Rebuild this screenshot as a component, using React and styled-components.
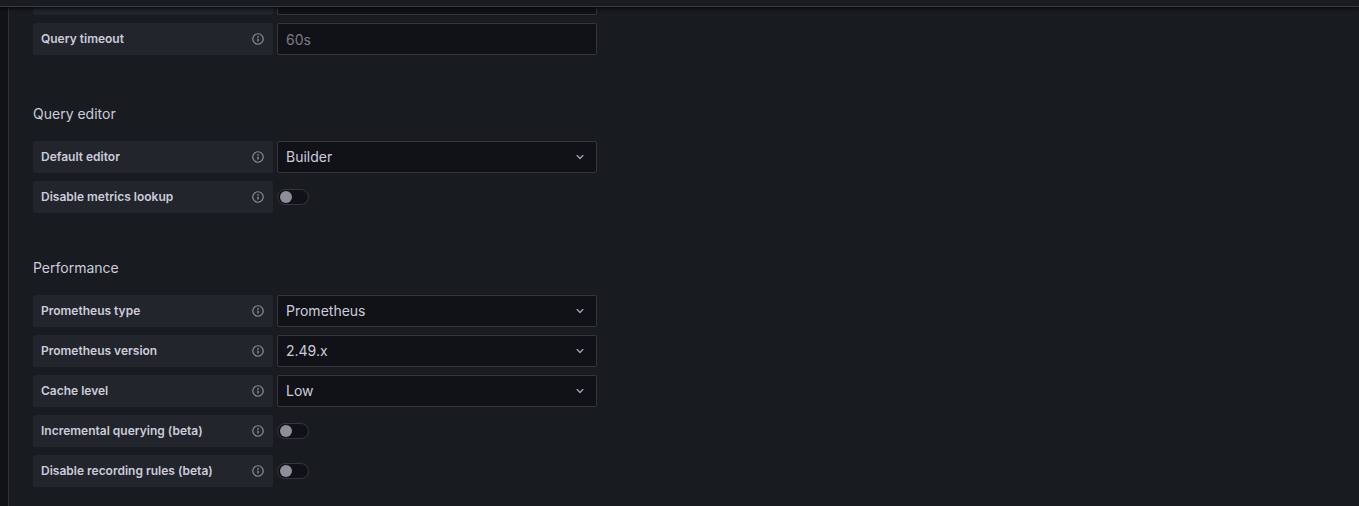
import React, { useId, useState } from 'react';
import styled, { createGlobalStyle } from 'styled-components';

const GlobalStyle = createGlobalStyle`
  * {
    box-sizing: border-box;
  }

  body {
    margin: 0;
    background: #111217;
    color: #ccccdc;
    font-family: Inter, "Liberation Sans", sans-serif;
    font-size: 14px;
    line-height: 22px;
  }
`;

const Layout = styled.div`
  display: flex;
  flex-direction: column;
  height: 100vh;
  overflow: hidden;
`;

const TopBar = styled.header`
  position: relative;
  z-index: 1;
  flex: none;
  height: 7px;
  background: #181b1f;
  border-bottom: 1px solid #3a3b41;
  box-shadow: 0 1px 4px #010409;
`;

/* the form is scrolled, its first row is half under the top bar */
const Page = styled.main`
  flex: 1;
  margin: -24px 0 0 8px;
  padding: 0 24px;
  background: #181b1f;
  border-left: 1px solid #2f3136;
`;

const Section = styled.section`
  margin-bottom: ${(props) => props.$gap || 44}px;
`;

const Title = styled.h6`
  margin: 0 0 16px;
  font-size: 14px;
  font-weight: 400;
  line-height: 22px;
`;

const Rows = styled.div`
  display: flex;
  flex-direction: column;
  gap: 8px;
`;

const Row = styled.div`
  display: flex;
  align-items: center;
  gap: 4px;
  height: 32px;
`;

const Label = styled.label`
  display: flex;
  align-items: center;
  justify-content: space-between;
  flex: none;
  width: 240px;
  height: 32px;
  padding: 0 8px;
  background: #22252b;
  border-radius: 2px;
  font-size: 12px;
  font-weight: 600;
`;

const InfoSvg = styled.svg`
  width: 14px;
  height: 14px;
  margin-left: auto;
  fill: #8f909c;
`;

const Input = styled.input`
  width: 320px;
  height: 32px;
  padding: 0 8px;
  background: #111217;
  border: 1px solid #35363c;
  border-radius: 2px;
  color: #ccccdc;
  font: inherit;
  outline: none;

  &::placeholder {
    color: #7b7c88;
    opacity: 1;
  }
`;

const SelectBox = styled.div`
  position: relative;
  width: 320px;
  height: 32px;
`;

const Select = styled.select`
  width: 100%;
  height: 100%;
  padding: 0 32px 0 8px;
  appearance: none;
  background: #111217;
  border: 1px solid #35363c;
  border-radius: 2px;
  color: #ccccdc;
  font: inherit;
  outline: none;
`;

const ArrowSvg = styled.svg`
  position: absolute;
  top: 8px;
  right: 9px;
  width: 16px;
  height: 16px;
  fill: #a3a4b1;
  pointer-events: none;
`;

const Switch = styled.input`
  display: flex;
  align-items: center;
  width: 32px;
  height: 16px;
  margin: 0;
  padding: 0 2px;
  appearance: none;
  background: #111217;
  border: 1px solid #35363c;
  border-radius: 8px;
  cursor: pointer;

  &::before {
    content: "";
    width: 12px;
    height: 12px;
    border-radius: 50%;
    background: #8e8e9b;
  }

  &:checked {
    justify-content: flex-end;
    background: #3d71d9;
  }
`;

const InfoIcon = () => (
    <InfoSvg viewBox="0 0 24 24" aria-hidden="true">
        <path d="M12 2a10 10 0 1 0 10 10A10 10 0 0 0 12 2Zm0 18a8 8 0 1 1 8-8 8 8 0 0 1-8 8Zm0-9a1.200 1.200 0 0 0-1.200 1.200v3.300a1.200 1.200 0 0 0 2.400 0v-3.300A1.200 1.200 0 0 0 12 11Zm0-4a1.400 1.400 0 1 0 1.400 1.400A1.400 1.400 0 0 0 12 7Z" />
    </InfoSvg>
);

const FieldLabel = ({ id, children }) => (
    <Label htmlFor={id}>
        {children}
        <InfoIcon />
    </Label>
);

const TextField = ({ label, placeholder, ...rest }) => {
    const id = useId();
    const [value, setValue] = useState('');
    return (
        <Row>
            <FieldLabel id={id}>{label}</FieldLabel>
            <Input
            id={id}
            placeholder={placeholder}
            value={value}
            onChange={(e) => setValue(e.target.value)}
            {...rest}
            />
        </Row>
    );
};

const SelectField = ({ label, options }) => {
    const id = useId();
    const [value, setValue] = useState(options[0]);
    return (
        <Row>
            <FieldLabel id={id}>{label}</FieldLabel>
            <SelectBox>
                <Select id={id} value={value} onChange={(e) => setValue(e.target.value)}>
                    {options.map((option) => <option key={option}>{option}</option>)}
                </Select>
                <ArrowSvg viewBox="0 0 24 24" aria-hidden="true">
                    <path d="M17 9.170a1 1 0 0 0-1.410 0L12 12.710 8.460 9.170a1 1 0 0 0-1.410 0 1 1 0 0 0 0 1.420l4.240 4.240a1 1 0 0 0 1.420 0L17 10.590a1 1 0 0 0 0-1.420Z" />
                </ArrowSvg>
            </SelectBox>
        </Row>
    );
};

const SwitchField = ({ label }) => {
    const id = useId();
    const [checked, setChecked] = useState(false);
    return (
        <Row>
            <FieldLabel id={id}>{label}</FieldLabel>
            <Switch
            id={id}
            type="checkbox"
            role="switch"
            checked={checked}
            onChange={(e) => setChecked(e.target.checked)}
            />
        </Row>
    );
};

const App = () => {
    return (
        <>
            <GlobalStyle />
            <Layout>
                <TopBar />
                <Page>
                    <Section $gap={48}>
                        <Rows>
                            <TextField aria-label="Scrape interval" />
                            <TextField label="Query timeout" placeholder="60s" />
                        </Rows>
                    </Section>
                    <Section>
                        <Title>Query editor</Title>
                        <Rows>
                            <SelectField label="Default editor" options={['Builder', 'Code']} />
                            <SwitchField label="Disable metrics lookup" />
                        </Rows>
                    </Section>
                    <Section>
                        <Title>Performance</Title>
                        <Rows>
                            <SelectField label="Prometheus type" options={['Prometheus', 'Cortex', 'Mimir', 'Thanos']} />
                            <SelectField label="Prometheus version" options={['2.49.x', '2.48.x', '2.47.x']} />
                            <SelectField label="Cache level" options={['Low', 'Medium', 'High', 'None']} />
                            <SwitchField label="Incremental querying (beta)" />
                            <SwitchField label="Disable recording rules (beta)" />
                        </Rows>
                    </Section>
                </Page>
            </Layout>
        </>
    );
};

export default App;
